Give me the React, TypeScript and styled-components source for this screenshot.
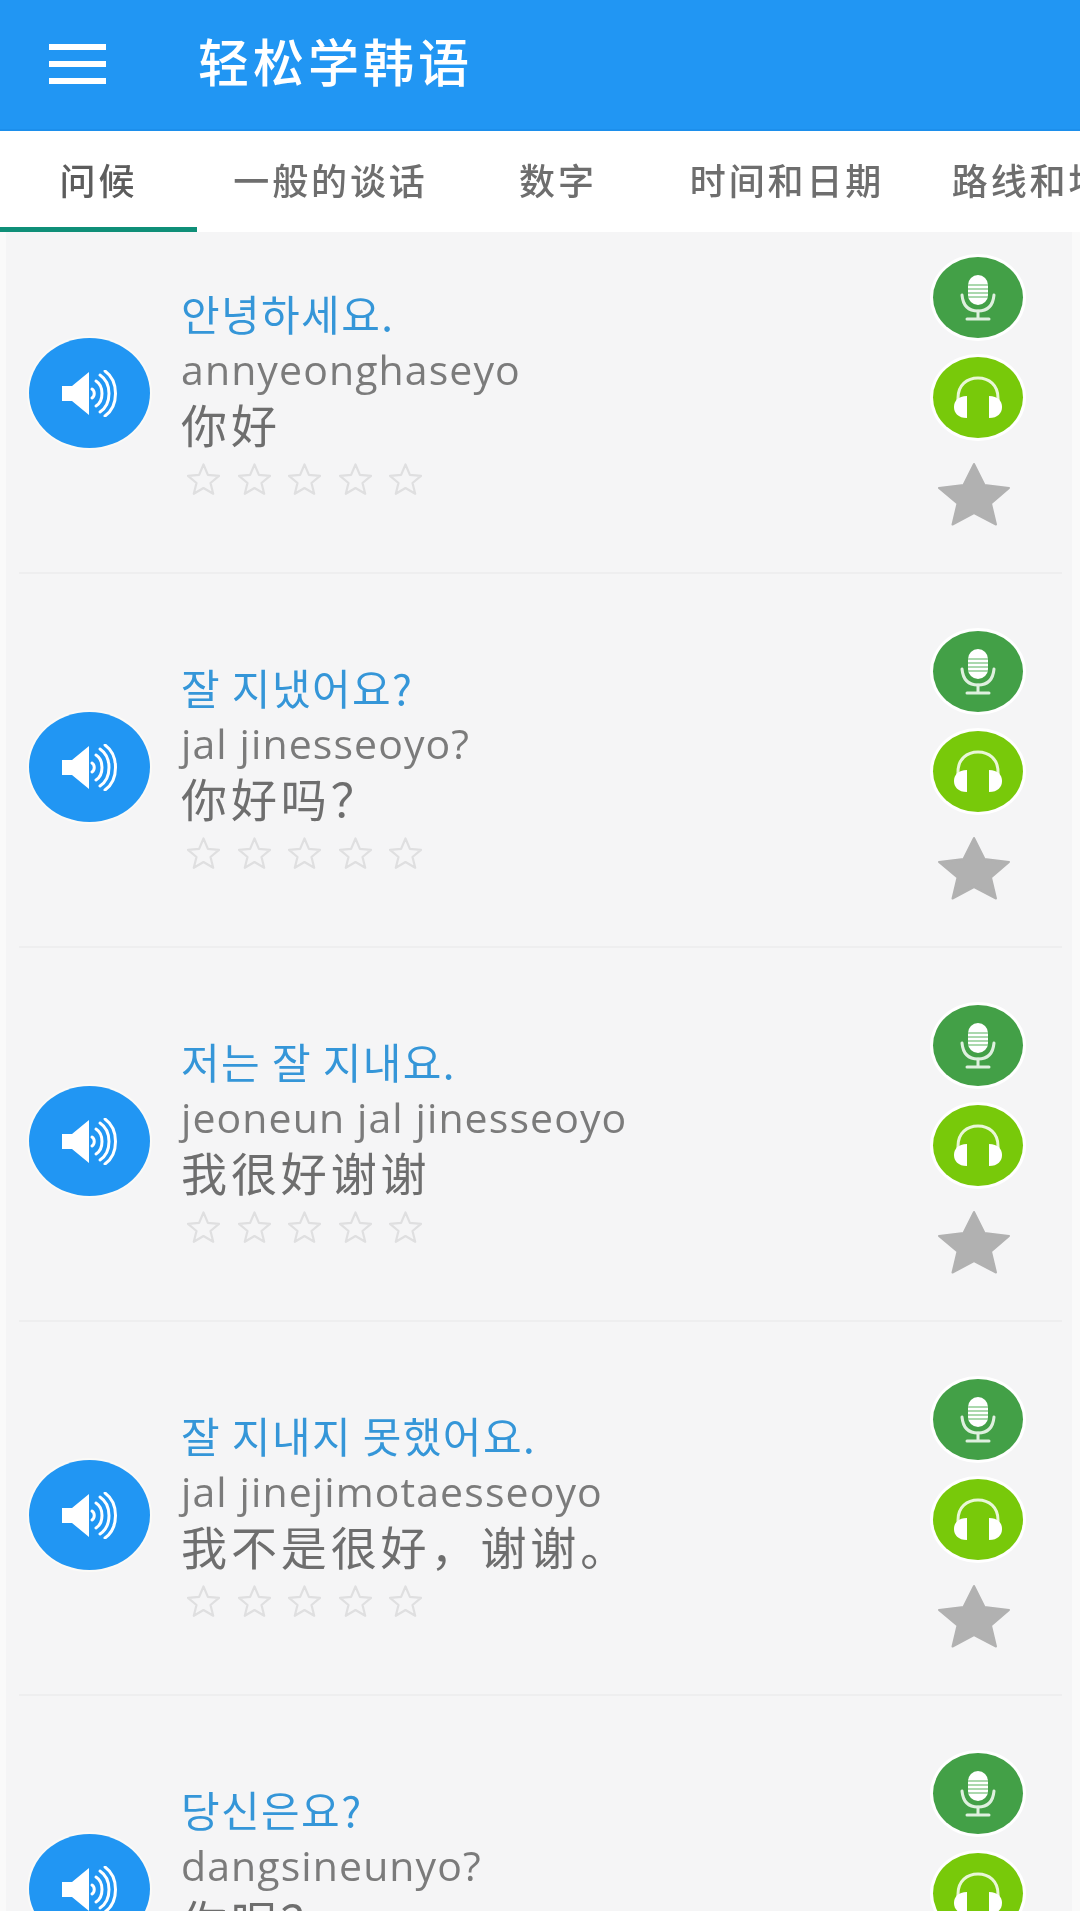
import React from "react";
import styled, { createGlobalStyle } from "styled-components";

const Global = createGlobalStyle`
  html, body { margin: 0; padding: 0; background: #fff; }
  * { box-sizing: border-box; }
`;

const Page = styled.div`
  width: 1080px;
  height: 1920px;
  overflow: hidden;
  display: flex;
  flex-direction: column;
  background: #fff;
  font-family: "Noto Sans CJK SC", "Noto Sans", sans-serif;
  filter: blur(0.6px);
`;

const Header = styled.header`
  height: 131px;
  flex: none;
  display: flex;
  align-items: center;
  padding: 0 0 10px 49px;
  background: #2196f3;
  border-bottom: 2px solid #1c8fec;
`;

const Burger = styled.div`
  width: 57px;
  display: flex;
  flex-direction: column;
  gap: 11px;
  margin: 8px 92px 0 0;
`;

const BurgerBar = styled.span`
  height: 6px;
  background: #fff;
`;

const AppTitle = styled.h1`
  margin: 0;
  color: #fff;
  font-size: 51px;
  line-height: 60px;
  font-weight: 500;
  letter-spacing: 4px;
`;

const Tabs = styled.nav`
  height: 101px;
  flex: none;
  display: flex;
  overflow: hidden;
  background: #fff;
`;

const Tab = styled.div<{ $w: number; $active?: boolean }>`
  flex: none;
  width: ${(p) => p.$w}px;
  height: 100%;
  display: flex;
  align-items: center;
  justify-content: center;
  padding-bottom: 1px;
  color: ${(p) => (p.$active ? "#5c5c5c" : "#6e6e6e")};
  font-size: 36px;
  font-weight: 500;
  letter-spacing: 2.9px;
  white-space: nowrap;
  border-bottom: 5px solid ${(p) => (p.$active ? "#0f8f78" : "transparent")};
`;

const List = styled.main`
  height: 1679px;
  flex: none;
  padding: 0 10px 0 13px;
  overflow: hidden;
  background: #f5f5f6;
  border-left: 6px solid #fafafa;
  border-right: 8px solid #fafafa;
`;

const Row = styled.article`
  display: flex;
  align-items: flex-start;
  padding: 57px 39px 46px 10px;
  border-bottom: 2px solid #eeeeef;
  &:first-child { padding-top: 25px; }
`;

const SpeakerButton = styled.div`
  flex: none;
  width: 121px;
  height: 110px;
  margin-top: 81px;
  border-radius: 50%;
  display: flex;
  align-items: center;
  justify-content: center;
  background: #2196f3;
  box-shadow: 0 0 0 2px #fbfaf7;
`;

const Texts = styled.div`
  margin: 28px 0 0 31px;
  display: flex;
  flex-direction: column;
`;

const Korean = styled.div`
  height: 56px;
  color: #3596d8;
  font-family: "Noto Sans CJK KR", sans-serif;
  font-size: 42px;
  font-weight: 400;
  line-height: 56px;
  letter-spacing: 1.4px;
  white-space: nowrap;
`;

const Roman = styled.div`
  height: 56px;
  color: #7b7b7b;
  font-family: "Open Sans", sans-serif;
  font-size: 41px;
  line-height: 56px;
  letter-spacing: 1.1px;
  white-space: nowrap;
`;

const Chinese = styled.div`
  height: 56px;
  color: #6e6e6e;
  font-family: "Noto Sans CJK SC", sans-serif;
  font-size: 46px;
  line-height: 52px;
  letter-spacing: 3.9px;
  white-space: nowrap;
`;

const Stars = styled.div`
  display: flex;
  gap: 17.5px;
  margin: 10px 0 0 6px;
`;

const Rail = styled.div`
  margin-left: auto;
  display: flex;
  flex-direction: column;
  align-items: center;
  flex: none;
  width: 90px;
`;

const ActionCircle = styled.div<{ $color: string }>`
  width: 90px;
  height: 81px;
  border-radius: 50%;
  display: flex;
  align-items: center;
  justify-content: center;
  background: ${(p) => p.$color};
  box-shadow: 0 0 0 3px #fff;
  & + & { margin-top: 19px; }
`;

const FavStar = styled.svg`
  width: 74px;
  height: 64px;
  margin: 24px 8px 0 0;
`;

const SpeakerIcon = () => (
  <svg width="55" height="47" viewBox="0 0 55 47" fill="none">
    <path d="M0 16h10L27 2v43L10 31H0z" fill="#fff" strokeLinejoin="round" />
    <g stroke="#fff" strokeWidth="3" strokeLinecap="round">
      <path d="M30 19c3 2 3 7 0 9" />
      <path d="M34 11c8 5 8 20 0 25" />
      <path d="M38 5c12 8 12 29 0 37" />
      <path d="M43 1c14 10 14 35 0 45" />
    </g>
  </svg>
);

const MicIcon = () => (
  <svg width="36" height="46" viewBox="0 0 36 46" fill="none">
    <rect x="8" y="0" width="20" height="30" rx="10" fill="#fff" />
    <g stroke="#8fcb93" strokeWidth="1.5">
      <path d="M8 10h20M8 14h20M8 18h20M8 22h20" />
    </g>
    <g stroke="#dff0df" strokeWidth="3" strokeLinecap="round">
      <path d="M2 20c1 11 7 16 16 16s15-5 16-16" />
      <path d="M18 36v8M7 44h22" />
    </g>
  </svg>
);

const HeadphonesIcon = () => (
  <svg width="50" height="43" viewBox="0 0 50 43" fill="none">
    <path d="M5 27V22C5 9 14 2 25 2s20 7 20 20v5" stroke="#e9f7d6" strokeWidth="3" />
    <path d="M14 20v22C5 42 1 37 1 31s4-11 13-11z" fill="#fff" />
    <path d="M36 20v22c9 0 13-5 13-11s-4-11-13-11z" fill="#fff" />
  </svg>
);

const OutlineStar = () => (
  <svg width="33" height="32" viewBox="0 0 33 32" fill="none">
    <path d="M16.5 1.5l4.4 10.4 11.1.9-8.5 7.2 2.7 10.8-9.7-5.8-9.700 5.800 2.700-10.800L1 12.800l11.100-.9z" stroke="#dfdfe0" strokeWidth="2.2" strokeLinejoin="round" />
  </svg>
);

const tabs = [
  { label: "问候", w: 197, active: true },
  { label: "一般的谈话", w: 267 },
  { label: "数字", w: 188 },
  { label: "时间和日期", w: 270 },
  { label: "路线和地点", w: 254 },
];

const phrases = [
  { ko: "안녕하세요.", ro: "annyeonghaseyo", zh: "你好" },
  { ko: "잘 지냈어요?", ro: "jal jinesseoyo?", zh: "你好吗？" },
  { ko: "저는 잘 지내요.", ro: "jeoneun jal jinesseoyo", zh: "我很好谢谢" },
  { ko: "잘 지내지 못했어요.", ro: "jal jinejimotaesseoyo", zh: "我不是很好，谢谢。" },
  { ko: "당신은요?", ro: "dangsineunyo?", zh: "你呢？" },
];

export default function App() {
  return (
    <Page>
      <Global />
      <Header>
        <Burger>
          <BurgerBar />
          <BurgerBar />
          <BurgerBar />
        </Burger>
        <AppTitle>轻松学韩语</AppTitle>
      </Header>
      <Tabs>
        {tabs.map((t) => (
          <Tab key={t.label} $w={t.w} $active={t.active}>
            {t.label}
          </Tab>
        ))}
      </Tabs>
      <List>
        {phrases.map((p) => (
          <Row key={p.ro}>
            <SpeakerButton>
              <SpeakerIcon />
            </SpeakerButton>
            <Texts>
              <Korean>{p.ko}</Korean>
              <Roman>{p.ro}</Roman>
              <Chinese>{p.zh}</Chinese>
              <Stars>
                {[0, 1, 2, 3, 4].map((i) => (
                  <OutlineStar key={i} />
                ))}
              </Stars>
            </Texts>
            <Rail>
              <ActionCircle $color="#43a047">
                <MicIcon />
              </ActionCircle>
              <ActionCircle $color="#78c90a">
                <HeadphonesIcon />
              </ActionCircle>
              <FavStar viewBox="0 0 74 64" preserveAspectRatio="none">
                <path d="M37 2l10.5 21 24.5 3-18 15.5 5 21L37 51 15.500 62.500l5-21L2 26l24.500-3z" fill="#b1b1b1" stroke="#b1b1b1" strokeWidth="2" strokeLinejoin="round" />
              </FavStar>
            </Rail>
          </Row>
        ))}
      </List>
    </Page>
  );
}
